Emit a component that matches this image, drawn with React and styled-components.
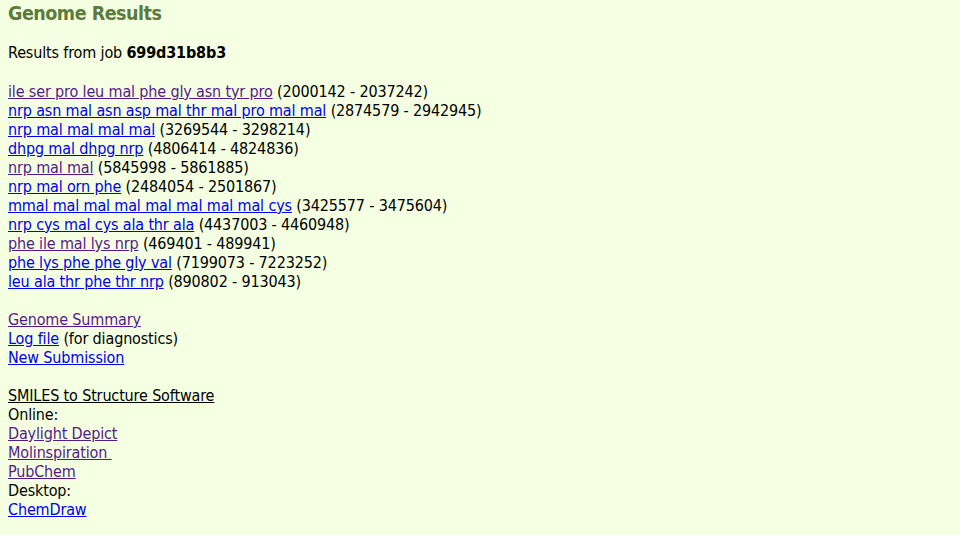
import { createGlobalStyle, styled } from "styled-components";

const GlobalStyle = createGlobalStyle`
  html, body {
    margin: 0;
    padding: 0;
    background: #f5ffe2;
  }
  body {
    font-family: "DejaVu Sans", Tahoma, Verdana, sans-serif;
    font-stretch: condensed;
    font-size: 16px;
    line-height: 19px;
    letter-spacing: -0.15px;
    color: #000;
  }
`;

const Page = styled.div`
  padding: 0 8px 8px;
`;

const Title = styled.h1`
  margin: 0;
  font-size: 19.5px;
  line-height: 27px;
  font-weight: bold;
  letter-spacing: -0.5px;
  color: #5b7b3b;
`;

const JobLine = styled.p`
  margin: 16px 0 0;
`;

const Group = styled.div`
  margin-top: ${({ $gap }) => $gap ?? 19}px;
  display: flex;
  flex-direction: column;
  align-items: flex-start;
`;

const Row = styled.div`
  white-space: pre;
`;

const Link = styled.a`
  color: ${({ $visited }) => ($visited ? "#551a8b" : "#0000ee")};
  text-decoration: underline;
`;

const Heading = styled.span`
  text-decoration: underline;
`;

const clusters = [
  ["ile ser pro leu mal phe gly asn tyr pro", "2000142 - 2037242", true],
  ["nrp asn mal asn asp mal thr mal pro mal mal", "2874579 - 2942945"],
  ["nrp mal mal mal mal", "3269544 - 3298214"],
  ["dhpg mal dhpg nrp", "4806414 - 4824836"],
  ["nrp mal mal", "5845998 - 5861885", true],
  ["nrp mal orn phe", "2484054 - 2501867"],
  ["mmal mal mal mal mal mal mal mal cys", "3425577 - 3475604"],
  ["nrp cys mal cys ala thr ala", "4437003 - 4460948"],
  ["phe ile mal lys nrp", "469401 - 489941", true],
  ["phe lys phe phe gly val", "7199073 - 7223252"],
  ["leu ala thr phe thr nrp", "890802 - 913043"],
];

export default function App() {
  return (
    <Page>
      <GlobalStyle />
      <Title>Genome Results</Title>
      <JobLine>
        Results from job <b>699d31b8b3</b>
      </JobLine>

      <Group $gap={20}>
        {clusters.map(([name, range, visited]) => (
          <Row key={range}>
            <Link href="#" $visited={visited}>
              {name}
            </Link>{" "}
            ({range})
          </Row>
        ))}
      </Group>

      <Group>
        <Row>
          <Link href="#" $visited>
            Genome Summary
          </Link>
        </Row>
        <Row>
          <Link href="#">Log file</Link> (for diagnostics)
        </Row>
        <Row>
          <Link href="#">New Submission</Link>
        </Row>
      </Group>

      <Group>
        <Row>
          <Heading>SMILES to Structure Software</Heading>
        </Row>
        <Row>Online:</Row>
        <Row>
          <Link href="#" $visited>
            Daylight Depict
          </Link>
        </Row>
        <Row>
          <Link href="#" $visited>
            {"Molinspiration "}
          </Link>
        </Row>
        <Row>
          <Link href="#" $visited>
            PubChem
          </Link>
        </Row>
        <Row>Desktop:</Row>
        <Row>
          <Link href="#">ChemDraw</Link>
        </Row>
      </Group>
    </Page>
  );
}
